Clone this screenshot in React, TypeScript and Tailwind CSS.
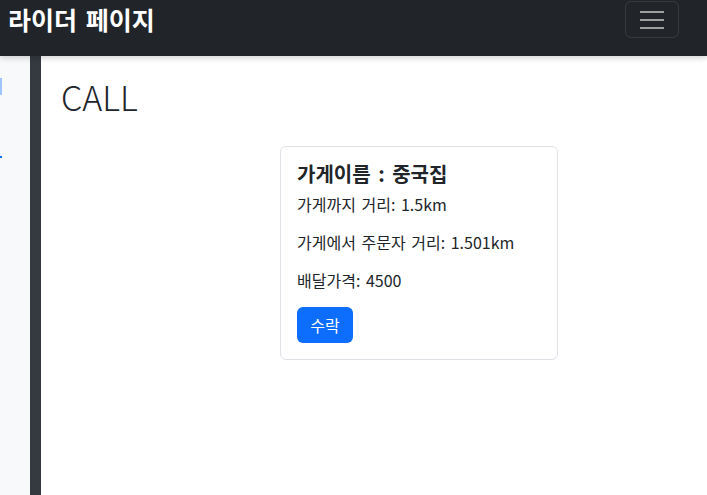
import React from 'react';

const CallCard: React.FC = () => (
  <div className="w-[278px] rounded-md border border-[#dee2e6] bg-white p-4 text-[#212529] [word-spacing:2px]">
    <h5 className="mb-2 text-[20px] font-bold leading-[22px] [word-spacing:3px]">가게이름 : 중국집</h5>
    <p className="mb-4 text-[16px] leading-[22px]">가게까지 거리: 1.5km</p>
    <p className="mb-4 text-[16px] leading-[22px]">가게에서 주문자 거리: 1.501km</p>
    <p className="mb-4 text-[16px] leading-[22px]">배달가격: 4500</p>
    <button className="h-9 w-[56px] rounded-md bg-[#0d6efd] text-[16px] leading-6 text-white">수락</button>
  </div>
);

export default function App() {
  return (
    <div
      className="flex min-h-screen flex-col bg-white"
      style={{ fontFamily: '"Noto Sans CJK KR", "Noto Sans", sans-serif' }}
    >
      {/* Navbar */}
      <nav className="relative z-10 flex h-14 items-start justify-between bg-[#212529] pl-2 pr-[28px] shadow-[0_2px_6px_rgba(0,0,0,0.18)]">
        <span className="mt-[4px] text-[25px] font-bold leading-[30px] text-white [word-spacing:3px]">라이더 페이지</span>
        <button
          className="mt-px flex h-[37px] w-[54px] flex-col items-center justify-center gap-[6px] rounded-md border border-white/10"
          aria-label="Toggle navigation"
        >
          <span className="block h-[2px] w-[24px] bg-white/55" />
          <span className="block h-[2px] w-[24px] bg-white/55" />
          <span className="block h-[2px] w-[24px] bg-white/55" />
        </button>
      </nav>

      <div className="flex flex-1">
        {/* Sidebar */}
        <aside className="relative w-[30px] overflow-hidden bg-[#f8f9fa]">
          <span className="absolute left-0 top-[22px] h-[17px] w-[2px] bg-[#9ec5fe]" />
          <span className="absolute left-0 top-[100px] h-[2px] w-[2px] bg-[#0d6efd]" />
        </aside>
        <div className="w-[11px] bg-[#343a40]" />

        {/* Content */}
        <main className="flex-1 px-5 pt-[19px]">
          <h1 className="text-[34px] font-light leading-[44px] text-[#212529]">CALL</h1>
          <div className="mt-[27px] pl-[219px]">
            <CallCard />
          </div>
        </main>
      </div>
    </div>
  );
}
